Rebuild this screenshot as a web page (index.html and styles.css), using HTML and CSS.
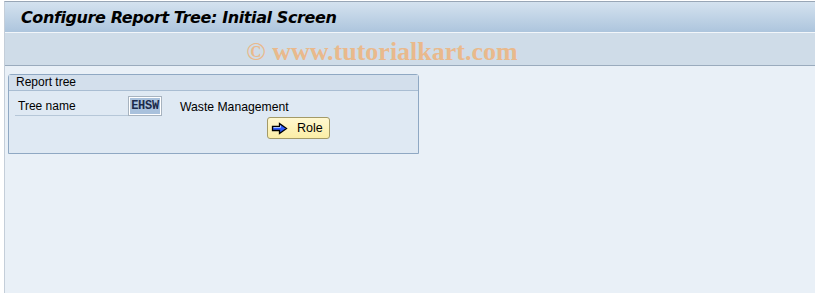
FILE: index.html
```html
<!DOCTYPE html>
<html>
<head>
<meta charset="utf-8">
<link rel="stylesheet" href="styles.css">
</head>
<body>
<div class="frame">
  <div class="titlebar"><h1 class="title">Configure Report Tree: Initial Screen</h1></div>
  <div class="toolbar"><span class="watermark">© www.tutorialkart.com</span></div>
  <div class="content">
    <div class="group">
      <div class="group-head">Report tree</div>
      <div class="group-body">
        <div class="row">
          <span class="label">Tree name</span>
          <span class="input"><span class="sel">EHSW</span></span>
          <span class="desc">Waste Management</span>
        </div>
        <div class="btnrow">
          <button class="btn">
            <svg class="arrow" width="17" height="13" viewBox="0 0 17 13">
              <path d="M1.5 4.5 H8.5 V1.5 L15.5 6.5 L8.5 11.5 V8.5 H1.5 Z" fill="#2f5cff" stroke="#000" stroke-width="1.3" stroke-linejoin="miter"/>
              <path d="M2.5 5.5 H9.5 V3.5" fill="none" stroke="#a9c4ff" stroke-width="1"/>
            </svg>
            <span class="btn-text">Role</span>
          </button>
        </div>
      </div>
    </div>
  </div>
</div>
</body>
</html>
```
FILE: styles.css
```css
html, body {
  margin: 0;
  padding: 0;
  background: #ffffff;
  height: 100%;
}
body {
  padding: 1px 0 1px 4px;
  box-sizing: border-box;
  font-family: "Liberation Sans", Arial, sans-serif;
  font-size: 12px;
  color: #000;
}
.frame {
  height: 100%;
  display: flex;
  flex-direction: column;
  border-top: 1px solid #98a6b6;
  border-left: 1px solid #c4ced9;
}
.titlebar {
  height: 30px;
  background: linear-gradient(#d4e2ef, #adc5dd);
  display: flex;
  align-items: center;
  padding-left: 16px;
  border-bottom: 1px solid #f2f6fa;
}
.title {
  margin: 0;
  font-size: 16px;
  font-weight: bold;
  font-style: italic;
  color: #000;
  font-family: "DejaVu Sans", Verdana, sans-serif;
  letter-spacing: -0.4px;
}
.toolbar {
  height: 33px;
  background: #cfdce8;
  border-bottom: 1px solid #9aabbd;
  display: flex;
  align-items: center;
  justify-content: center;
  box-sizing: border-box;
}
.watermark {
  font-family: "Liberation Serif", "Times New Roman", serif;
  font-weight: bold;
  font-size: 26px;
  color: #e9b98c;
  margin-right: 56px;
  margin-top: 5px;
}
.content {
  flex: 1;
  background: #e9f0f7;
  padding: 8px 0 0 3px;
}
.group {
  width: 411px;
  height: 80px;
  box-sizing: border-box;
  border: 1px solid #8fa8c3;
  border-radius: 3px 3px 0 0;
  background: #dfe9f3;
}
.group-head {
  height: 16px;
  line-height: 15px;
  padding-left: 7px;
  background: #d3dfec;
  border-bottom: 1px solid #a9bdd2;
  box-sizing: border-box;
  font-size: 12px;
}
.group-body {
  padding: 5px 0 0 6px;
}
.row {
  display: flex;
  align-items: center;
  height: 20px;
}
.label {
  width: 110px;
  height: 19px;
  line-height: 21px;
  padding-left: 3px;
  border-bottom: 1px solid #b6c7d8;
  box-sizing: content-box;
}
.input {
  width: 34px;
  height: 20px;
  box-sizing: border-box;
  border: 1px solid #a7b3bf;
  background: #ffffff;
  display: flex;
  align-items: center;
  padding: 1px;
}
.sel {
  display: block;
  background: #a9c1dc;
  color: #1b2a4a;
  font-family: "Liberation Mono", "Courier New", monospace;
  font-size: 12px;
  line-height: 16px;
  padding: 0;
  width: 100%;
  box-sizing: border-box;
  text-align: center;
  letter-spacing: -0.3px;
  font-weight: bold;
}
.desc {
  margin-left: 18px;
  font-size: 12.2px;
  padding-top: 2px;
}
.btnrow {
  padding-left: 252px;
  margin-top: 1px;
}
.btn {
  width: 63px;
  height: 22px;
  box-sizing: border-box;
  border: 1px solid #a39a67;
  border-radius: 3px;
  background: linear-gradient(#fff8d0, #fbeea6);
  display: flex;
  align-items: center;
  padding: 0 0 0 3px;
  font-family: "Liberation Sans", Arial, sans-serif;
  font-size: 12.5px;
  color: #000;
}
.arrow {
  flex: none;
}
.btn-text {
  margin-left: 9px;
}
```
